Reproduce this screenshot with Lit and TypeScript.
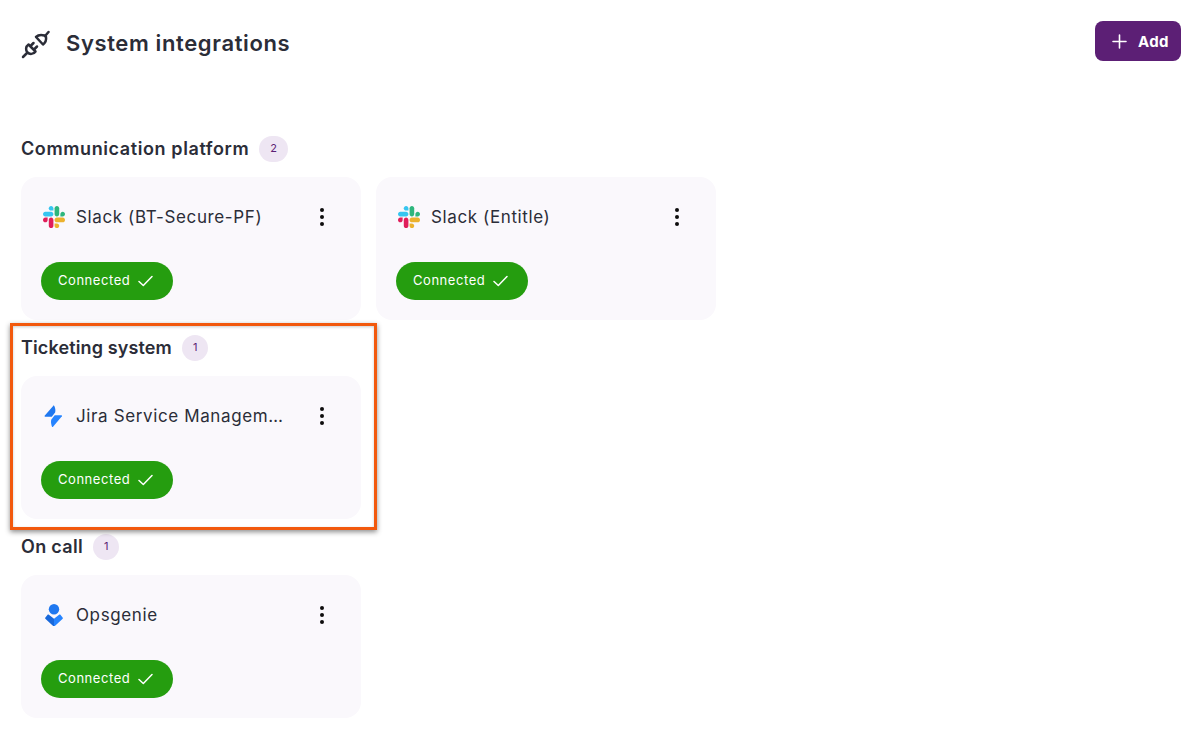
import { LitElement, html, css, svg } from "lit";
import { customElement } from "lit/decorators.js";

const slack = html`<svg class="logo" viewBox="0 0 122.8 122.8">
<path d="M25.8 77.6c0 7.1-5.8 12.9-12.9 12.9S0 84.7 0 77.6s5.8-12.9 12.9-12.9h12.9v12.9z" fill="#E01E5A"/>
<path d="M32.3 77.6c0-7.1 5.8-12.9 12.9-12.9s12.9 5.8 12.9 12.9v32.3c0 7.1-5.8 12.9-12.9 12.9s-12.9-5.8-12.9-12.9V77.6z" fill="#E01E5A"/>
<path d="M45.2 25.8c-7.1 0-12.9-5.8-12.9-12.9S38.1 0 45.2 0s12.9 5.8 12.9 12.9v12.9H45.2z" fill="#36C5F0"/>
<path d="M45.2 32.3c7.1 0 12.9 5.8 12.9 12.9s-5.8 12.9-12.9 12.9H12.9C5.8 58.1 0 52.3 0 45.2s5.8-12.9 12.9-12.9h32.3z" fill="#36C5F0"/>
<path d="M97 45.2c0-7.1 5.8-12.9 12.9-12.9s12.9 5.8 12.9 12.9-5.8 12.9-12.9 12.9H97V45.2z" fill="#2EB67D"/>
<path d="M90.5 45.2c0 7.1-5.8 12.9-12.9 12.9s-12.9-5.8-12.9-12.9V12.9C64.7 5.8 70.5 0 77.6 0s12.9 5.8 12.9 12.9v32.3z" fill="#2EB67D"/>
<path d="M77.6 97c7.1 0 12.9 5.8 12.9 12.9s-5.8 12.9-12.9 12.9-12.9-5.8-12.9-12.9V97h12.9z" fill="#ECB22E"/>
<path d="M77.6 90.5c-7.1 0-12.9-5.8-12.9-12.9s5.8-12.9 12.9-12.9h32.3c7.1 0 12.9 5.8 12.9 12.9s-5.8 12.9-12.9 12.9H77.6z" fill="#ECB22E"/>
</svg>`;

const jira = html`<svg class="logo" viewBox="0 0 22 22">
<path d="M10.600 .5 1.600 10.800c-.3.400 0 .9.500.9h6.700l3.300-4.300c.6-1 .5-5-1.500-7.400z" fill="#1F78F0"/>
<path d="M9.400 22.500 18.900 11.200c.3-.4 0-.9-.5-.9h-6.700l-3.300 4.300c-.7 1-.5 5 1 7.900z" fill="#2684FF"/>
</svg>`;

const ops = html`<svg class="logo" viewBox="0 0 22 22">
<circle cx="11" cy="5.300" r="5.200" fill="#1F78F0"/>
<path d="M11 22.800 2.600 15c-.5-.5-.6-1-.2-1.500l2-2.500c.4-.5 1-.6 1.500-.2L11 14.800z" fill="#1868DB"/>
<path d="M11 22.800 19.400 15c.5-.5.6-1 .2-1.500l-2-2.500c-.4-.5-1-.6-1.500-.2L11 14.800z" fill="#2684FF"/>
</svg>`;

const check = svg`<path d="M1 7.500 5.300 11.500 14 2.500" fill="none" stroke="currentColor" stroke-width="1.500" stroke-linecap="round" stroke-linejoin="round"/>`;

type Item = { name: string; logo: unknown };
type Group = { title: string; track: number; items: Item[] };

const groups: Group[] = [
  {
    title: "Communication platform",
    track: 0.6,
    items: [
      { name: "Slack (BT-Secure-PF)", logo: slack },
      { name: "Slack (Entitle)", logo: slack },
    ],
  },
  { title: "Ticketing system", track: 0.13, items: [{ name: "Jira Service Management", logo: jira }] },
  { title: "On call", track: 0.3, items: [{ name: "Opsgenie", logo: ops }] },
];

@customElement("app-root")
export class AppRoot extends LitElement {
  static styles = css`
    :host {
      display: block;
      position: relative;
      height: 730px;
      overflow: hidden;
      background: #fff;
      box-sizing: border-box;
      padding: 21px 8px 0 21px;
      font-family: Inter, "Liberation Sans", sans-serif;
      color: #2b2d38;
    }
    .header {
      display: flex;
      align-items: center;
      justify-content: space-between;
      height: 40px;
      margin-bottom: 75px;
    }
    .title-wrap {
      display: flex;
      align-items: center;
      gap: 16px;
    }
    .plug {
      width: 29px;
      height: 29px;
      display: block;
      margin-top: 7px;
      color: #2b2d38;
    }
    h1 {
      margin: 0;
      padding-top: 4px;
      font-size: 22px;
      font-weight: 600;
      line-height: 30px;
      letter-spacing: 0.62px;
    }
    .add {
      display: flex;
      align-items: center;
      gap: 11px;
      box-sizing: border-box;
      width: 86px;
      height: 40px;
      padding-left: 17px;
      border: 0;
      border-radius: 8px;
      background: #5c1f75;
      color: #fff;
      font: 700 15px Inter, sans-serif;
      letter-spacing: 0.3px;
    }
    .add svg {
      width: 15px;
      height: 15px;
      display: block;
    }
    .section {
      margin-bottom: 15px;
    }
    .head {
      display: flex;
      align-items: center;
      height: 26px;
      gap: 10px;
      margin-bottom: 15px;
    }
    h2 {
      margin: 0;
      font-size: 18px;
      font-weight: 600;
      line-height: 26px;
    }
    .badge {
      box-sizing: border-box;
      min-width: 26px;
      height: 26px;
      padding: 0 11px;
      border-radius: 13px;
      background: #eee6f3;
      color: #5c1f75;
      font-size: 11px;
      line-height: 24px;
      text-align: center;
    }
    .cards {
      display: flex;
      gap: 15px;
    }
    .card {
      box-sizing: border-box;
      width: 340px;
      height: 143px;
      padding: 28px 20px 20px 20px;
      border-radius: 16px;
      background: #faf8fc;
      display: flex;
      flex-direction: column;
      justify-content: space-between;
    }
    .row {
      display: flex;
      align-items: center;
      height: 24px;
    }
    .logo {
      width: 22px;
      height: 22px;
      margin-left: 2px;
      display: block;
      flex: none;
    }
    .name {
      margin-left: 11px;
      width: 207px;
      padding-top: 1px;
      font-size: 17px;
      line-height: 23px;
      letter-spacing: 0.62px;
      white-space: nowrap;
      overflow: hidden;
      text-overflow: ellipsis;
    }
    .kebab {
      width: 4px;
      margin-left: 37px;
      display: flex;
      flex-direction: column;
      gap: 3px;
    }
    .kebab i {
      display: block;
      width: 4px;
      height: 4px;
      border-radius: 50%;
      background: #0d0d0d;
    }
    .pill {
      align-self: flex-start;
      box-sizing: border-box;
      width: 132px;
      height: 38px;
      padding: 0 0 2px 17px;
      display: flex;
      align-items: center;
      gap: 8px;
      border-radius: 19px;
      background: #259d0f;
      color: #fff;
      font-size: 13px;
      font-weight: 400;
      letter-spacing: 0.55px;
    }
    .pill svg {
      width: 15px;
      height: 14px;
      display: block;
      margin-top: 2px;
    }
    .highlight {
      position: absolute;
      left: 10px;
      top: 323px;
      width: 367px;
      height: 207px;
      box-sizing: border-box;
      border: 3px solid #f2590d;
      box-shadow: 0 2px 5px rgba(0, 0, 0, 0.45), inset 0 1px 3px rgba(0, 0, 0, 0.2);
      pointer-events: none;
    }
  `;

  render() {
    return html`
      <div class="header">
        <div class="title-wrap">
          <svg class="plug" viewBox="0 0 29 29" fill="none" stroke="currentColor" stroke-width="2.500" stroke-linecap="round" stroke-linejoin="round">
            <path d="M2 27l4-4" />
            <path d="M7.500 14.500 14.500 21.500C12.500 24.500 8.500 24.500 6.500 22.500 4.500 20.500 4.500 16.500 7.500 14.500Z" />
            <path d="M10 15.500l2.500-2.500M13.500 19l2.500-2.500" />
            <path d="M15 7 22 14.500C24.500 12.500 25.500 10 25 7L23.500 5.500C20.500 4.500 17 5 15 7Z" />
            <path d="M24.500 5.500l3-3.500" />
          </svg>
          <h1>System integrations</h1>
        </div>
        <button class="add">
          <svg viewBox="0 0 15 15" fill="none" stroke="currentColor" stroke-width="1.600" stroke-linecap="round"><path d="M7.500 1v13M1 7.500h13" /></svg>
          Add
        </button>
      </div>
      ${groups.map(
        (g) => html`
          <section class="section">
            <div class="head">
              <h2 style="letter-spacing:${g.track}px">${g.title}</h2>
              <span class="badge">${g.items.length}</span>
            </div>
            <div class="cards">
              ${g.items.map(
                (it) => html`
                  <div class="card">
                    <div class="row">
                      ${it.logo}
                      <span class="name">${it.name}</span>
                      <span class="kebab"><i></i><i></i><i></i></span>
                    </div>
                    <div class="pill">
                      Connected
                      <svg viewBox="0 0 15 14">${check}</svg>
                    </div>
                  </div>
                `
              )}
            </div>
          </section>
        `
      )}
      <div class="highlight"></div>
    `;
  }
}
